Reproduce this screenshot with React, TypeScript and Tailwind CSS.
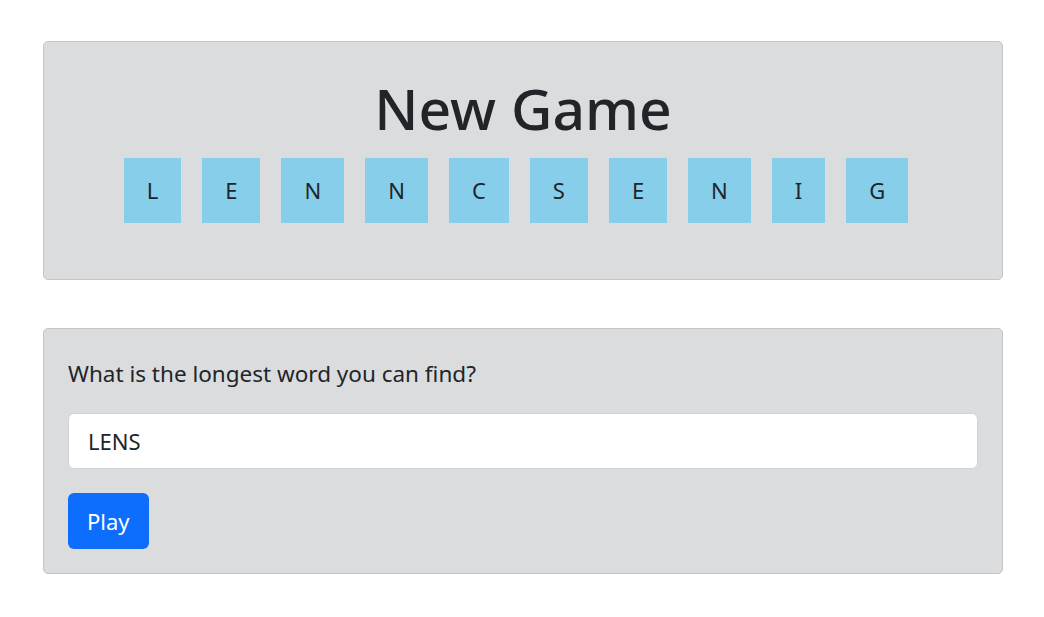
const letters = ["L", "E", "N", "N", "C", "S", "E", "N", "I", "G"];

export default function App() {
  return (
    <div
      className="min-h-screen bg-white px-[43px] pt-[41px] text-[#212529]"
      style={{ fontFamily: '"Noto Sans", "Open Sans", sans-serif' }}
    >
      <div className="w-[960px] rounded-[5px] border border-[#c4c5c7] bg-[#dbdcde] pb-[56px] pt-[30px]">
        <h1 className="text-center text-[57px] font-medium leading-[72px]">New Game</h1>
        <div className="mt-[14px] flex justify-center gap-[21px] pr-[14px]">
          {letters.map((l, i) => (
            <div
              key={i}
              className="flex h-[65px] items-center justify-center bg-[#87ceeb] px-[23px] text-[22px]"
            >
              {l}
            </div>
          ))}
        </div>
      </div>

      <div className="mt-[48px] w-[960px] rounded-[5px] border border-[#c4c5c7] bg-[#dbdcde] px-[24px] pb-[24px] pt-[30px]">
        <p className="text-[22.5px] leading-[30px]">What is the longest word you can find?</p>
        <input
          className="mt-[24px] block h-[56px] w-full rounded-[6px] border border-[#ced4da] bg-white px-[19px] text-[22px] text-[#212529] outline-none"
          defaultValue="LENS"
        />
        <button className="mt-[24px] h-[56px] rounded-[6px] bg-[#0d6efd] px-[19px] text-[22px] text-white">
          Play
        </button>
      </div>
    </div>
  );
}
